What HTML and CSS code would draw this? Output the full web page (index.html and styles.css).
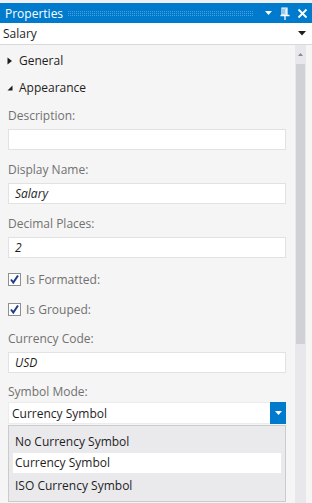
FILE: index.html
```html
<!DOCTYPE html>
<html lang="en">

<head>
    <meta charset="UTF-8">
    <meta name="viewport" content="width=device-width, initial-scale=1.0">
    <title>Properties</title>
    <link rel="stylesheet" href="styles.css">
</head>

<body>
    <div class="panel">
        <header class="titlebar">
            <span class="title">Properties</span>
            <span class="grip"></span>
            <div class="title-icons">
                <svg width="9" height="8" viewBox="0 0 9 8"><path d="M1 2h7L4.5 6z" fill="#fff"/></svg>
                <svg width="10" height="13" viewBox="0 0 10 13"><path d="M2 1h5v7H2zM4 1v6.5" fill="none" stroke="#fff" stroke-width="1.2"/><path d="M6 1.5v6" stroke="#fff" stroke-width="1.6"/><path d="M0.5 8.5h9M5 8.5V13" stroke="#fff" stroke-width="1.3"/></svg>
                <svg width="11" height="11" viewBox="0 0 11 11"><path d="M1.5 1.5l8 8M9.5 1.5l-8 8" stroke="#fff" stroke-width="1.8"/></svg>
            </div>
        </header>

        <div class="object-select">
            <span>Salary</span>
            <svg width="8" height="5" viewBox="0 0 8 5"><path d="M0 0h8L4 4.5z" fill="#1e1e1e"/></svg>
        </div>

        <div class="body">
            <main class="content">
                <div class="group">
                    <svg width="6" height="8" viewBox="0 0 6 8"><path d="M0.5 0.5L5 4L0.5 7.5z" fill="#1e1e1e"/></svg>
                    General
                </div>
                <div class="group">
                    <svg width="6" height="8" viewBox="0 0 6 8"><path d="M5.5 1.5V6.5H0.5z" fill="#1e1e1e"/></svg>
                    Appearance
                </div>

                <div class="field">
                    <label>Description:</label>
                    <div class="input"></div>
                </div>
                <div class="field">
                    <label>Display Name:</label>
                    <div class="input">Salary</div>
                </div>
                <div class="field">
                    <label>Decimal Places:</label>
                    <div class="input">2</div>
                </div>

                <div class="check">
                    <span class="box"><svg width="11" height="11" viewBox="0 0 11 11"><path d="M2 5.5l2.3 3L9 1.5" fill="none" stroke="#1f3b8f" stroke-width="2"/></svg></span>
                    Is Formatted:
                </div>
                <div class="check">
                    <span class="box"><svg width="11" height="11" viewBox="0 0 11 11"><path d="M2 5.5l2.3 3L9 1.5" fill="none" stroke="#1f3b8f" stroke-width="2"/></svg></span>
                    Is Grouped:
                </div>

                <div class="field">
                    <label>Currency Code:</label>
                    <div class="input">USD</div>
                </div>

                <div class="field combo-field">
                    <label>Symbol Mode:</label>
                    <div class="combo">
                        <span>Currency Symbol</span>
                        <span class="combo-btn"><svg width="7" height="4" viewBox="0 0 7 4"><path d="M0 0h7L3.5 4z" fill="#fff"/></svg></span>
                    </div>
                    <ul class="dropdown">
                        <li>No Currency Symbol</li>
                        <li class="selected">Currency Symbol</li>
                        <li>ISO Currency Symbol</li>
                    </ul>
                </div>
            </main>

            <div class="scrollbar">
                <svg width="11" height="12" viewBox="0 0 11 12"><path d="M3 8h5L5.5 5z" fill="#868999"/></svg>
                <div class="thumb"></div>
            </div>
        </div>
    </div>
</body>

</html>
```

FILE: styles.css
```css
*, *::before, *::after {
    box-sizing: border-box;
}

:root {
    --vs-blue: #007acc;
    --panel-bg: #f5f5f5;
    --label-color: #717171;
    --text-color: #1e1e1e;
    --input-border: #e2e2e2;
}

body {
    margin: 0;
    height: 503px;
    overflow: hidden;
    background: var(--panel-bg);
    font-family: 'Open Sans', 'Noto Sans', sans-serif;
    font-size: 12px;
    color: var(--text-color);
}

.panel {
    display: flex;
    flex-direction: column;
    height: 100%;
    padding-top: 3px;
    background: #f0f0f2;
}

.titlebar {
    display: flex;
    align-items: center;
    height: 20px;
    padding: 0 4px 0 5px;
    background: var(--vs-blue);
    color: #fff;
}

.title {
    font-size: 12px;
}

.grip {
    flex: 1;
    height: 5px;
    margin: 1px 10px 0 5px;
    background-image: radial-gradient(circle at 0.5px 0.5px, #4aa0dc 0.5px, transparent 0.6px);
    background-size: 2px 2px;
}

.title-icons {
    display: flex;
    align-items: center;
    gap: 7px;
}

.object-select {
    display: flex;
    align-items: center;
    justify-content: space-between;
    height: 22px;
    padding: 0 6px 0 3px;
    background: #fff;
    border-bottom: 1px solid #d9d9dd;
}

.body {
    flex: 1;
    display: flex;
    min-height: 0;
    background: var(--panel-bg);
}

.content {
    flex: 1;
    padding: 2px 9px 0 8px;
}

.group {
    display: flex;
    align-items: center;
    gap: 6px;
    height: 27px;
    margin-left: -1px;
    font-size: 12px;
}

.field {
    display: flex;
    flex-direction: column;
    margin-top: 12px;
}

.group + .field {
    margin-top: 7px;
}

.field label {
    line-height: 16px;
    margin-bottom: 5px;
    color: var(--label-color);
}

.input {
    height: 21px;
    padding: 0 6px;
    line-height: 19px;
    background: #fff;
    border: 1px solid var(--input-border);
    font-style: italic;
}

.check {
    display: flex;
    align-items: center;
    gap: 5px;
    height: 16px;
    margin-top: 13px;
    color: var(--label-color);
}

.check + .check {
    margin-top: 14px;
}

.check + .field {
    margin-top: 14px;
}

.box {
    display: flex;
    align-items: center;
    justify-content: center;
    width: 13px;
    height: 13px;
    background: #fff;
    border: 1px solid #8e8f8f;
}

.combo-field {
    margin-top: 11px;
}

.combo-field label {
    margin-bottom: 2px;
}

.combo {
    display: flex;
    align-items: center;
    justify-content: space-between;
    height: 22px;
    padding-left: 3px;
    background: #fff;
    border: 1px solid #ececec;
    border-right: none;
}

.combo-btn {
    display: flex;
    align-items: center;
    justify-content: center;
    width: 16px;
    height: 22px;
    background: var(--vs-blue);
}

.dropdown {
    list-style: none;
    margin: 1px 0 0;
    padding: 6px 4px 6px;
    background: #eaeaed;
    border: 1px solid #cacacf;
}

.dropdown li {
    height: 20px;
    line-height: 20px;
    padding-left: 2px;
    margin-bottom: 1px;
}

.dropdown li:last-child {
    line-height: 23px;
}

.dropdown li.selected {
    background: #fff;
}

.scrollbar {
    display: flex;
    flex-direction: column;
    align-items: center;
    width: 11px;
    margin-right: 6px;
    background: #e8e8ec;
}

.scrollbar svg {
    margin-top: 3px;
}

.thumb {
    width: 9px;
    height: 280px;
    margin-top: 4px;
    border-radius: 1px;
    background: #d0d1d7;
}
```
